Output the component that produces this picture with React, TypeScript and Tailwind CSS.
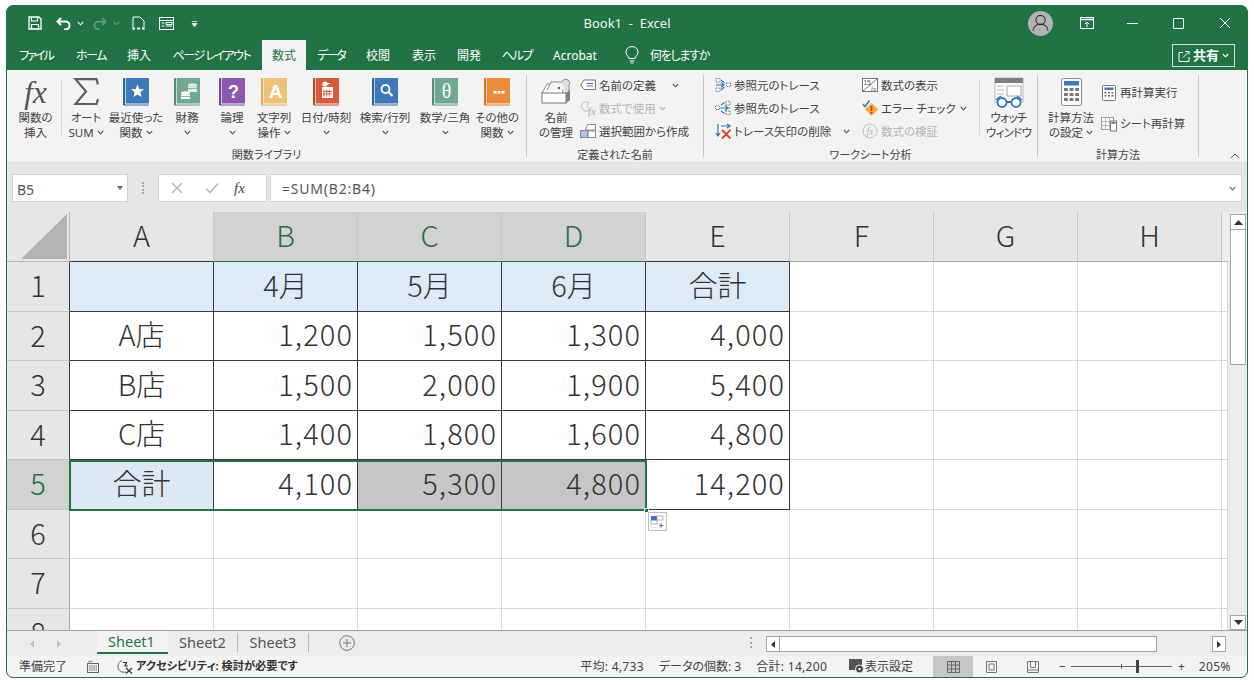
import type { ReactNode } from "react";

const Chevron = ({ color = "#555", className = "" }: { color?: string; className?: string }) => (
  <svg width="7" height="5" viewBox="0 0 7 5" className={className}>
    <path d="M0.8 1 L3.5 3.8 L6.2 1" fill="none" stroke={color} strokeWidth="1.1" />
  </svg>
);

// Ribbon book icons
const Book = ({ color, dark, children }: { color: string; dark: string; children?: ReactNode }) => (
  <svg width="26" height="28" viewBox="0 0 26 28">
    <rect x="0" y="0" width="26" height="27.5" fill={dark} rx="1" />
    <rect x="2" y="0" width="1.2" height="26" fill="#ffffffb0" />
    <rect x="3.2" y="0" width="22.8" height="25.5" fill={color} />
    <rect x="2" y="25.5" width="24" height="1" fill="#ffffff" />
    {children}
  </svg>
);

const BookIcon = ({ kind }: { kind: string }) => {
  if (kind === "star")
    return (
      <Book color="#3f79b9" dark="#2f659f">
        <path d="M14.5 6.5 L16.3 11 L21 11.3 L17.4 14.3 L18.6 19 L14.5 16.4 L10.4 19 L11.6 14.3 L8 11.3 L12.7 11 Z" fill="#fff" />
      </Book>
    );
  if (kind === "coins")
    return (
      <Book color="#71a891" dark="#578d77">
        <ellipse cx="18.5" cy="7" rx="4.5" ry="1.8" fill="#dfeee7" />
        <rect x="14" y="8.5" width="9" height="5.5" fill="#dfeee7" />
        <ellipse cx="11.5" cy="15" rx="4.5" ry="1.8" fill="#fff" />
        <rect x="7" y="16.5" width="9" height="4.5" fill="#fff" />
        <path d="M7 18.5h9M14 10.5h9" stroke="#71a891" strokeWidth="0.8" />
      </Book>
    );
  if (kind === "question")
    return (
      <Book color="#8b58ad" dark="#754495">
        <text x="14.5" y="20" textAnchor="middle" fontSize="18" fontWeight="700" fill="#fff" fontFamily="Liberation Sans">?</text>
      </Book>
    );
  if (kind === "text")
    return (
      <Book color="#efc375" dark="#e0ad55">
        <text x="14.5" y="20" textAnchor="middle" fontSize="19" fontWeight="700" fill="#fff" fontFamily="Liberation Sans">A</text>
      </Book>
    );
  if (kind === "date")
    return (
      <Book color="#d65c3c" dark="#bb4727">
        <rect x="9" y="9" width="11" height="11" fill="#fff" />
        <circle cx="12" cy="6" r="2.6" fill="#fff" />
        <path d="M11 11.5v7M13.7 11.5v7M16.3 11.5v7M10 13.5h9M10 16h9" stroke="#d65c3c" strokeWidth="0.9" />
        <rect x="12" y="5" width="5" height="1.3" fill="#fff" />
      </Book>
    );
  if (kind === "search")
    return (
      <Book color="#3f79b9" dark="#2f659f">
        <circle cx="13.5" cy="11" r="4" fill="none" stroke="#fff" strokeWidth="1.8" />
        <path d="M16.5 14 L20.5 18" stroke="#fff" strokeWidth="2" />
      </Book>
    );
  if (kind === "theta")
    return (
      <Book color="#71a891" dark="#578d77">
        <text x="14.5" y="19.5" textAnchor="middle" fontSize="20" fill="#fff" fontFamily="Liberation Serif">θ</text>
      </Book>
    );
  return (
    <Book color="#ea8b3d" dark="#d87724">
      <path d="M9.5 13h3v2.4h-3zM13.5 13h3v2.4h-3zM17.5 13h3v2.4h-3z" fill="#fff" />
    </Book>
  );
};

const Sigma = () => (
  <svg width="26" height="28" viewBox="0 0 26 28">
    <path d="M25 6.5 L23.5 1.2 H2.5 L13 13.5 L2.5 26 H23.5 L25 21" fill="none" stroke="#5f5f5f" strokeWidth="2.2" />
  </svg>
);

const NameManager = () => (
  <svg width="30" height="28" viewBox="0 0 30 28">
    <path d="M1 15 L6 6 H20 L22 15" fill="#fff" stroke="#8a8a8a" />
    <path d="M6 12 L10 4 H22 L25 12" fill="#f2f2f2" stroke="#8a8a8a" />
    <path d="M21 3 a4 3.5 0 0 1 7 4 V15 h-4" fill="#ddd" stroke="#8a8a8a" />
    <rect x="1" y="15" width="24" height="10" fill="#fff" stroke="#777" />
    <path d="M25 15 L29 12 V22 L25 25 Z" fill="#808080" />
    <circle cx="18" cy="10" r="1.2" fill="#666" />
  </svg>
);

const WatchWindow = () => (
  <svg width="30" height="31" viewBox="0 0 30 31">
    <rect x="1" y="1" width="28" height="24" fill="#fafafa" stroke="#bbb" />
    <rect x="1" y="1" width="28" height="5" fill="#7f7f7f" />
    <rect x="13" y="9" width="14" height="10" fill="#fff" stroke="#aaa" />
    <path d="M3 9h7M3 13h7M3 17h7" stroke="#bbb" />
    <path d="M2 23 L7 19 M28 23 L23 19" stroke="#2f77c0" strokeWidth="1.6" />
    <circle cx="8" cy="25.5" r="4.5" fill="#fff" stroke="#2f77c0" strokeWidth="1.8" />
    <circle cx="22" cy="25.5" r="4.5" fill="#fff" stroke="#2f77c0" strokeWidth="1.8" />
    <path d="M12.5 25 H17.5" stroke="#2f77c0" strokeWidth="1.8" />
  </svg>
);

const Calculator = () => (
  <svg width="21" height="28" viewBox="0 0 21 28">
    <rect x="0.5" y="0.5" width="20" height="27" rx="2" fill="#fafafa" stroke="#888" />
    <rect x="3" y="3" width="15" height="4.5" fill="#3f79b9" />
    <path d="M3 10h3.8v3H3zM8.6 10h3.8v3H8.6zM14.2 10H18v3h-3.8zM3 15h3.8v3H3zM8.6 15h3.8v3H8.6zM14.2 15H18v3h-3.8zM3 20h3.8v3H3zM8.6 20h3.8v3H8.6zM14.2 20H18v3h-3.8z" fill="#777" />
  </svg>
);

// Small 16px ribbon icons
const SmallIcon = ({ kind }: { kind: string }) => {
  const parts: Record<string, ReactNode> = {
    define: (
      <>
        <path d="M4 3 H15.5 V12.5 H4 L0.7 7.8 Z" fill="#fff" stroke="#777" />
        <path d="M6.5 6.5h6.5M6.5 9h6.5" stroke="#3f79b9" />
      </>
    ),
    use: (
      <>
        <path d="M3 2 H9 L7 6 L10 11 H4 L1 6 Z" fill="none" stroke="#c4c4c4" />
        <text x="8" y="15" fontSize="11" fontStyle="italic" fontFamily="Liberation Serif" fill="#b0b0b0">fx</text>
      </>
    ),
    create: (
      <>
        <path d="M6 5 L8 1.5 H15.5 V7 H6 Z" fill="#fff" stroke="#888" />
        <rect x="0.5" y="7.5" width="7" height="7" fill="#a9c4de" stroke="#7b8ea0" />
        <rect x="8" y="8" width="7.5" height="6.5" fill="#fff" stroke="#888" />
      </>
    ),
    precedent: (
      <>
        <path d="M1 1.5h4v3.5H1zM1 11h4v3.5H1zM11.5 6h4v3.5h-4z" fill="#fff" stroke="#777" strokeDasharray="1.2 0.8" />
        <path d="M1 8h7M6 5.5 L9 8 L6 10.5M6 3 L9.5 6M6 13 L9.5 10" fill="none" stroke="#2f77c0" strokeWidth="1.1" />
      </>
    ),
    dependent: (
      <>
        <path d="M0.5 6h4v3.5h-4zM11 1.5h4v3.5h-4zM11 11h4v3.5h-4z" fill="#fff" stroke="#777" strokeDasharray="1.2 0.8" />
        <path d="M5 8h10M10 5.5 L13 8 L10 10.5M6 5 L9.5 2.5M6 11 L9.5 13.5" fill="none" stroke="#2f77c0" strokeWidth="1.1" />
      </>
    ),
    remove: (
      <>
        <path d="M3 1v11M1 10 L3 13 L5 10" fill="none" stroke="#2f77c0" strokeWidth="1.2" />
        <path d="M6 3h8M12 1 L15 3 L12 5" fill="none" stroke="#2f77c0" strokeWidth="1.2" />
        <path d="M7 7 L15.5 15.5M15.5 7 L7 15.5" stroke="#d9462c" strokeWidth="1.8" />
      </>
    ),
    show: (
      <>
        <rect x="0.5" y="1.5" width="15" height="13" fill="#fff" stroke="#777" />
        <path d="M0.5 14.5 L15.5 1.5" stroke="#777" />
        <text x="1.5" y="8" fontSize="6.5" fontFamily="Liberation Sans" fill="#555">15</text>
        <text x="9" y="13.5" fontSize="7" fontStyle="italic" fontFamily="Liberation Serif" fill="#555">fx</text>
      </>
    ),
    error: (
      <>
        <path d="M1 4 L3 6.5 L7.5 0.5" fill="none" stroke="#2f77c0" strokeWidth="1.5" />
        <path d="M9.5 3 L16 9.5 L9.5 16 L3 9.5 Z" fill="#f0ae3a" />
        <path d="M9.5 6v5M9.5 12v1.8" stroke="#c8391f" strokeWidth="1.6" />
      </>
    ),
    evaluate: (
      <>
        <circle cx="8" cy="8" r="7" fill="none" stroke="#c0c0c0" />
        <text x="4.5" y="11.5" fontSize="9.5" fontStyle="italic" fontFamily="Liberation Serif" fill="#b0b0b0">fx</text>
      </>
    ),
    calcNow: (
      <>
        <rect x="1.5" y="0.5" width="13" height="15" rx="1" fill="#fff" stroke="#777" />
        <rect x="3.5" y="2.5" width="9" height="2.5" fill="#3f79b9" />
        <path d="M3.5 7h2v1.5h-2zM7 7h2v1.5H7zM10.5 7h2v1.5h-2zM3.5 10h2v1.5h-2zM7 10h2v1.5H7zM10.5 10h2v1.5h-2z" fill="#666" />
      </>
    ),
    calcSheet: (
      <>
        <rect x="0.5" y="1.5" width="12" height="12" fill="#fff" stroke="#999" />
        <path d="M0.5 5.5h12M0.5 9.5h12M4.5 1.5v12M8.5 1.5v12" stroke="#bbb" />
        <rect x="9.5" y="5" width="6" height="10" fill="#fff" stroke="#777" />
        <rect x="10.5" y="6" width="4" height="1.8" fill="#3f79b9" />
      </>
    ),
  };
  return (
    <svg width="17" height="17" viewBox="0 0 17 17" className="shrink-0">
      {parts[kind]}
    </svg>
  );
};

const LargeButton = ({
  width,
  icon,
  lines,
  chev = false,
  chevOnly = false,
  tight = false,
}: {
  width: string;
  icon: ReactNode;
  lines: string[];
  chev?: boolean;
  chevOnly?: boolean;
  tight?: boolean;
}) => (
  <div className={`${width} shrink-0 flex flex-col items-center pt-[8px]`}>
    <div className="h-[28px] flex items-center justify-center">{icon}</div>
    <div className={`mt-[4px] text-[11.5px] leading-[15px] text-[#444] text-center whitespace-nowrap ${tight ? "tracking-[-0.7px]" : ""}`}>
      {lines.map((line, i) => (
        <div key={i} className="flex items-center justify-center gap-[3px] h-[15px]">
          {line}
          {chev && i === lines.length - 1 && <Chevron />}
        </div>
      ))}
      {chevOnly && (
        <div className="flex items-center justify-center h-[15px]">
          <Chevron />
        </div>
      )}
    </div>
  </div>
);

const SmallRow = ({
  icon,
  label,
  disabled = false,
  chev,
  inlineChev = false,
}: {
  icon: string;
  label: string;
  disabled?: boolean;
  chev?: string;
  inlineChev?: boolean;
}) => (
  <div className="h-[23px] flex items-center whitespace-nowrap">
    <div className="w-[19px] shrink-0">
      <SmallIcon kind={icon} />
    </div>
    <span className={`text-[11.5px] ${disabled ? "text-[#b4b4b4]" : "text-[#444]"}`}>{label}</span>
    {inlineChev && <Chevron color="#b4b4b4" className="ml-[3px]" />}
    {chev && <Chevron className={`ml-auto ${chev}`} />}
  </div>
);

const Sep = () => <div className="w-px bg-[#c8c8c8] my-[5px] shrink-0" />;
const InnerSep = () => <div className="w-px bg-[#d8d8d8] mt-[10px] h-[55px] shrink-0" />;

const Group = ({ width, label, children }: { width: string; label: string; children: ReactNode }) => (
  <div className={`${width} shrink-0 flex flex-col`}>
    <div className="h-[77px] flex">{children}</div>
    <div className="text-[11px] leading-[15px] text-[#444] text-center">{label}</div>
  </div>
);

const tabs = [
  { label: "ファイル", w: "w-[58px]", track: "tracking-[-2px]" },
  { label: "ホーム", w: "w-[52px]", track: "tracking-[-1.5px]" },
  { label: "挿入", w: "w-[44px]", track: "" },
  { label: "ページ レイアウト", w: "w-[101px]", track: "tracking-[-1.5px]" },
  { label: "数式", w: "w-[44px]", track: "", active: true },
  { label: "データ", w: "w-[50px]", track: "tracking-[-2px]" },
  { label: "校閲", w: "w-[44px]", track: "" },
  { label: "表示", w: "w-[48px]", track: "" },
  { label: "開発", w: "w-[42px]", track: "" },
  { label: "ヘルプ", w: "w-[54px]", track: "tracking-[-1.3px]" },
  { label: "Acrobat", w: "w-[62px]", track: "" },
];

const columns = ["A", "B", "C", "D", "E", "F", "G", "H", ""];
const selectedColumns = ["B", "C", "D"];
const rowHeights = ["h-[50px]", "h-[49px]", "h-[50px]", "h-[49px]", "h-[50px]", "h-[49px]", "h-[50px]", "h-[50px]"];

const data: string[][] = [
  ["", "4月", "5月", "6月", "合計"],
  ["A店", "1,200", "1,500", "1,300", "4,000"],
  ["B店", "1,500", "2,000", "1,900", "5,400"],
  ["C店", "1,400", "1,800", "1,600", "4,800"],
  ["合計", "4,100", "5,300", "4,800", "14,200"],
];

const cellBg = (row: number, col: number) => {
  if (row === 0) return "bg-[#ddebf7]";
  if (row === 4 && col === 0) return "bg-[#dce9f5]";
  if (row === 4 && (col === 2 || col === 3)) return "bg-[#c6c6c6]";
  return "bg-white";
};

const Cell = ({ row, col }: { row: number; col: number }) => {
  const value = data[row]?.[col];
  const inTable = value !== undefined;
  const centered = row === 0 || col === 0;
  return (
    <div
      className={`border-r border-b flex items-center overflow-hidden whitespace-nowrap pb-[5px] ${
        inTable ? `border-[#3a3a3a] ${cellBg(row, col)}` : "border-[#d9d9d9] bg-white"
      } ${centered ? "justify-center" : "justify-end pr-[4px] tracking-[1.1px]"}`}
    >
      {value}
    </div>
  );
};

const Sheet = () => (
  <div className="relative flex-1 flex bg-[#ececec] overflow-hidden">
    <div className="w-[1221px] h-[419px] overflow-hidden grid grid-cols-[63px_repeat(8,144px)_6px] content-start text-[29px] leading-none text-[#333] font-light [font-family:'Noto_Sans_CJK_JP',sans-serif]">
      <div className="h-[50px] bg-[#e6e6e6] border-r border-b border-[#b8b8b8] relative">
        <svg width="48" height="46" viewBox="0 0 48 46" className="absolute right-[1px] bottom-[1px]">
          <polygon points="47,0 47,45 1,45" fill="#b3b3b3" />
        </svg>
      </div>
      {columns.map((c, i) => (
        <div
          key={i}
          className={`h-[50px] pb-[5px] flex items-center justify-center border-r border-b ${
            i === 8 ? "bg-[#ececec] border-[#b8b8b8] border-r-0" : "border-r-[#c6c6c6]"
          } ${
            selectedColumns.includes(c)
              ? "bg-[#d2d2d2] text-[#1f6e43] border-b-[#217346]"
              : i < 5
                ? "bg-[#e6e6e6] border-b-[#3a3a3a]"
                : i < 8
                  ? "bg-[#e6e6e6] border-b-[#a6a6a6]"
                  : ""
          }`}
        >
          {c}
        </div>
      ))}
      {rowHeights.map((h, r) => (
        <div key={r} className="contents">
          <div
            className={`${h} pb-[4px] flex items-center justify-center border-r border-b border-b-[#c6c6c6] ${
              r < 5 ? "border-r-[#3a3a3a]" : "border-r-[#a6a6a6]"
            } ${r === 4 ? "bg-[#d2d2d2] text-[#1f6e43]" : "bg-[#e6e6e6]"}`}
          >
            {r + 1}
          </div>
          {columns.map((_, c) => (
            <Cell key={c} row={r} col={c} />
          ))}
        </div>
      ))}
    </div>
    {/* selection outline */}
    <div className="absolute left-[62px] top-[248px] w-[578px] h-[51px] border-2 border-[#217346]" />
    <div className="absolute left-[637px] top-[296px] w-[5px] h-[5px] bg-[#217346] border border-white" />
    {/* quick analysis button */}
    <div className="absolute left-[641px] top-[300px] w-[19px] h-[19px] bg-white border border-[#bdbdbd]">
      <svg width="17" height="17" viewBox="0 0 17 17">
        <rect x="2" y="3" width="6" height="4" fill="#3f6fd8" />
        <rect x="8" y="3" width="6" height="4" fill="#fff" stroke="#999" strokeWidth="0.7" />
        <rect x="2" y="7.5" width="6" height="3.5" fill="#fff" stroke="#999" strokeWidth="0.7" />
        <rect x="2" y="11.5" width="6" height="3" fill="#fff" stroke="#bbb" strokeWidth="0.7" strokeDasharray="1 1" />
        <path d="M10 12.5h4.5M12.2 10.3v4.5" stroke="#777" strokeWidth="1.2" />
      </svg>
    </div>
    {/* vertical scrollbar */}
    <div className="flex-1 pl-[2px] pt-[2px] flex flex-col">
      <div className="w-[16px] h-[16px] bg-white border border-[#a6a6a6] flex items-center justify-center">
        <svg width="9" height="5" viewBox="0 0 9 5"><polygon points="4.5,0 9,5 0,5" fill="#333" /></svg>
      </div>
      <div className="w-[16px] h-[135px] bg-white border border-[#a6a6a6] border-t-0" />
      <div className="mt-auto w-[16px] h-[15px] bg-white border border-[#a6a6a6] flex items-center justify-center">
        <svg width="9" height="5" viewBox="0 0 9 5"><polygon points="0,0 9,0 4.5,5" fill="#333" /></svg>
      </div>
    </div>
  </div>
);

const App = () => {
  return (
    <div className="w-[1254px] h-[685px] bg-white pt-[5px] pl-[6px] [font-family:'Noto_Sans','Noto_Sans_CJK_JP',sans-serif] [font-feature-settings:'palt']">
      <div className="w-[1242px] h-[673px] rounded-[7px] border border-[#217346] overflow-hidden flex flex-col bg-[#217346]">
        {/* title bar */}
        <div className="h-[34px] shrink-0 grid grid-cols-[1fr_auto_1fr] items-center text-[#eef5f1]">
          <div className="flex items-center pl-[21px]">
            <svg width="14" height="14" viewBox="0 0 14 14">
              <path d="M1 1 H11 L13 3 V13 H1 Z" fill="none" stroke="#fff" strokeWidth="1.3" />
              <path d="M3.5 1.5V5h6V1.5M3.5 13V8.5h7V13" fill="none" stroke="#fff" strokeWidth="1.2" />
            </svg>
            <svg width="15" height="13" viewBox="0 0 15 13" className="ml-[14px]">
              <path d="M5 1 L1.5 4.5 L5 8 M2 4.5 H9.5 a4 4 0 0 1 0 8 H8" fill="none" stroke="#fff" strokeWidth="2" />
            </svg>
            <Chevron color="#e6f0ea" className="ml-[6px]" />
            <svg width="14" height="13" viewBox="0 0 15 13" className="ml-[9px]">
              <path d="M10 1 L13.5 4.5 L10 8 M13 4.5 H5.5 a4 4 0 0 0 0 8 H7" fill="none" stroke="#5f9c7c" strokeWidth="2" />
            </svg>
            <Chevron color="#5f9c7c" className="ml-[6px]" />
            <svg width="13" height="15" viewBox="0 0 13 15" className="ml-[12px]">
              <path d="M1 14 V1 H8 L12 5 V14" fill="none" stroke="#fff" strokeWidth="1" />
              <path d="M1 12.5h2M5 12.5h3M10 12.5h2" stroke="#fff" strokeWidth="2" />
            </svg>
            <svg width="15" height="13" viewBox="0 0 15 13" className="ml-[14px]">
              <rect x="0.5" y="0.5" width="14" height="12" fill="none" stroke="#fff" />
              <path d="M0.5 3.5h14M2.5 6h3M2.5 9h3M7 5.5h6v2H7zM7 9h6" fill="none" stroke="#fff" />
            </svg>
            <svg width="7" height="7" viewBox="0 0 7 7" className="ml-[17px]">
              <path d="M1 1.5h5M1 3.5h5L3.5 6.5Z" fill="#fff" stroke="#fff" strokeWidth="0.7" />
            </svg>
          </div>
          <div className="text-[13px] pt-[1px] whitespace-pre">Book1  -  Excel</div>
          <div className="flex items-center justify-end">
            <div className="w-[25px] h-[25px] rounded-full bg-[#b3b3b3] flex items-center justify-center mr-[27px]">
              <svg width="17" height="18" viewBox="0 0 17 18">
                <circle cx="8.5" cy="6" r="4.6" fill="none" stroke="#333" strokeWidth="1.1" />
                <path d="M1 17 a7.5 7 0 0 1 15 0" fill="none" stroke="#333" strokeWidth="1.1" />
              </svg>
            </div>
            <svg width="14" height="12" viewBox="0 0 14 12" className="mr-[33px]">
              <rect x="0.5" y="0.5" width="13" height="11" fill="none" stroke="#fff" />
              <path d="M0.5 2.5h13" stroke="#fff" strokeWidth="1.4" />
              <path d="M7 10V5M5 7 L7 5 L9 7" fill="none" stroke="#fff" />
            </svg>
            <div className="w-[11px] h-px bg-white mr-[35px]" />
            <div className="w-[11px] h-[11px] border border-white rounded-[1px] mr-[35px]" />
            <svg width="12" height="12" viewBox="0 0 12 12" className="mr-[16px]">
              <path d="M1 1 L11 11 M11 1 L1 11" stroke="#fff" />
            </svg>
          </div>
        </div>

        {/* ribbon tabs */}
        <div className="h-[30px] shrink-0 flex text-[12px] text-white relative">
          {tabs.map((tab) => (
            <div
              key={tab.label}
              className={`${tab.w} ${tab.track} shrink-0 pt-[1px] flex items-center justify-center whitespace-pre ${
                tab.active ? "bg-[#f3f3f3] text-[#217346]" : ""
              }`}
            >
              {tab.label}
            </div>
          ))}
          <svg width="14" height="18" viewBox="0 0 14 18" className="ml-[19px] self-center">
            <path d="M4 12.5 C3.5 10 1 9 1 6 a6 5.5 0 0 1 12 0 C13 9 10.5 10 10 12.5 Z M4.5 15h5M5.5 17h3" fill="none" stroke="#fff" />
          </svg>
          <div className="ml-[11px] pt-[1px] flex items-center tracking-[-1.3px]">何をしますか</div>
          <div className="absolute left-[1165px] top-[4px] w-[63px] h-[23px] border border-[#cfe0d6] flex items-center justify-center gap-[3px]">
            <svg width="12" height="12" viewBox="0 0 12 12">
              <path d="M5 2.5H1v9h10V7M7 1.5h4v3M11 1.5 L5 7.5" fill="none" stroke="#fff" />
            </svg>
            <span className="font-bold text-[13px]">共有</span>
            <Chevron color="#fff" />
          </div>
        </div>

        {/* ribbon */}
        <div className="h-[93px] shrink-0 flex bg-[#f3f3f3] border-b border-[#dcdcdc]">
          <Group width="w-[519px]" label="関数ライブラリ">
            <div className="w-[3px]" />
            <LargeButton
              width="w-[51px]"
              icon={<span className="text-[31px] leading-none italic text-[#555] [font-family:'Liberation_Serif',serif]">fx</span>}
              lines={["関数の", "挿入"]}
            />
            <InnerSep />
            <LargeButton width="w-[48px]" icon={<Sigma />} lines={["オート", "SUM"]} chev />
            <LargeButton width="w-[52px]" icon={<BookIcon kind="star" />} lines={["最近使った", "関数"]} chev />
            <LargeButton width="w-[50px]" icon={<BookIcon kind="coins" />} lines={["財務"]} chevOnly />
            <LargeButton width="w-[40px]" icon={<BookIcon kind="question" />} lines={["論理"]} chevOnly />
            <LargeButton width="w-[44px]" icon={<BookIcon kind="text" />} lines={["文字列", "操作"]} chev />
            <LargeButton width="w-[60px]" icon={<BookIcon kind="date" />} lines={["日付/時刻"]} chevOnly />
            <LargeButton width="w-[58px]" icon={<BookIcon kind="search" />} lines={["検索/行列"]} chevOnly />
            <LargeButton width="w-[62px]" icon={<BookIcon kind="theta" />} lines={["数学/三角"]} chevOnly />
            <LargeButton width="w-[42px]" icon={<BookIcon kind="other" />} lines={["その他の", "関数"]} chev />
          </Group>
          <Sep />
          <Group width="w-[176px]" label="定義された名前">
            <div className="w-[9px]" />
            <LargeButton width="w-[40px]" icon={<NameManager />} lines={["名前", "の管理"]} />
            <div className="ml-[4px] pt-[4px] w-[123px]">
              <SmallRow icon="define" label="名前の定義" chev="mr-[24px]" />
              <SmallRow icon="use" label="数式で使用" disabled inlineChev />
              <SmallRow icon="create" label="選択範囲から作成" />
            </div>
          </Group>
          <Sep />
          <Group width="w-[333px]" label="ワークシート分析">
            <div className="ml-[11px] pt-[4px] w-[147px]">
              <SmallRow icon="precedent" label="参照元のトレース" />
              <SmallRow icon="dependent" label="参照先のトレース" />
              <SmallRow icon="remove" label="トレース矢印の削除" chev="mr-[12px]" />
            </div>
            <div className="pt-[4px] w-[117px]">
              <SmallRow icon="show" label="数式の表示" />
              <SmallRow icon="error" label="エラー チェック" chev="mr-[12px]" />
              <SmallRow icon="evaluate" label="数式の検証" disabled />
            </div>
            <InnerSep />
            <LargeButton width="w-[57px]" icon={<WatchWindow />} lines={["ウォッチ", "ウィンドウ"]} tight />
          </Group>
          <Sep />
          <Group width="w-[160px]" label="計算方法">
            <div className="w-[3px]" />
            <LargeButton width="w-[60px]" icon={<Calculator />} lines={["計算方法", "の設定"]} chev />
            <div className="pt-[9px]">
              <div className="h-[28px] flex items-center">
                <SmallRow icon="calcNow" label="再計算実行" />
              </div>
              <div className="h-[3px]" />
              <div className="h-[28px] flex items-center">
                <SmallRow icon="calcSheet" label="シート再計算" />
              </div>
            </div>
          </Group>
          <Sep />
          <div className="flex-1 flex items-end justify-end pr-[7px] pb-[3px]">
            <svg width="10" height="6" viewBox="0 0 10 6">
              <path d="M0.8 5 L5 1 L9.2 5" fill="none" stroke="#555" />
            </svg>
          </div>
        </div>

        {/* formula bar */}
        <div className="h-[49px] shrink-0 bg-[#e6e6e6] pl-[5px] pt-[11px]">
          <div className="flex h-[28px] text-[14px] text-[#555]">
            <div className="w-[116px] bg-white border border-[#d4d4d4] flex items-center justify-between pl-[4px] pr-[4px]">
              <span className="pt-[2px]">B5</span>
              <svg width="6" height="4" viewBox="0 0 6 4"><polygon points="0,0 6,0 3,4" fill="#666" /></svg>
            </div>
            <div className="w-[30px] flex items-center justify-center">
              <div className="w-[2px] h-[12px] border-l-2 border-dotted border-[#a6a6a6]" />
            </div>
            <div className="w-[109px] bg-white border border-[#d4d4d4] flex items-center pl-[12px]">
              <svg width="12" height="12" viewBox="0 0 12 12">
                <path d="M1 1 L11 11M11 1 L1 11" stroke="#b0b0b0" strokeWidth="1.2" />
              </svg>
              <svg width="14" height="12" viewBox="0 0 14 12" className="ml-[22px]">
                <path d="M1 6.5 L5 10.5 L13 1.5" fill="none" stroke="#b0b0b0" strokeWidth="1.4" />
              </svg>
              <span className="ml-[15px] italic text-[15px] text-[#444] [font-family:'Liberation_Serif',serif]">fx</span>
            </div>
            <div className="ml-[3px] w-[972px] bg-white border border-[#d4d4d4] flex items-center justify-between pl-[11px] pr-[5px]">
              <span className="tracking-[0.8px]">=SUM(B2:B4)</span>
              <Chevron color="#666" />
            </div>
          </div>
        </div>

        <Sheet />

        {/* sheet tabs */}
        <div className="h-[26px] shrink-0 bg-[#ececec] border-t border-[#a6a6a6] flex items-start text-[14.5px] text-[#555] relative">
          <svg width="7" height="8" viewBox="0 0 7 8" className="absolute left-[22px] top-[9px]"><polygon points="5,0 5,8 1,4" fill="#c0c0c0" /></svg>
          <svg width="7" height="8" viewBox="0 0 7 8" className="absolute left-[48px] top-[9px]"><polygon points="2,0 2,8 6,4" fill="#c0c0c0" /></svg>
          <div className="ml-[90px] w-[71px] h-[23px] pr-[2px] bg-[#f3f3f3] border-b-2 border-[#217346] text-[#217346] flex items-center justify-center">
            Sheet1
          </div>
          <div className="w-[69px] h-[23px] flex items-center justify-center">Sheet2</div>
          <div className="w-px h-[19px] mt-[2px] bg-[#b8b8b8]" />
          <div className="w-[70px] h-[23px] flex items-center justify-center">Sheet3</div>
          <div className="w-px h-[19px] mt-[2px] bg-[#b8b8b8]" />
          <svg width="16" height="16" viewBox="0 0 16 16" className="ml-[30px] mt-[4px]">
            <circle cx="8" cy="8" r="7.3" fill="none" stroke="#777" />
            <path d="M8 4v8M4 8h8" stroke="#777" />
          </svg>
          <div className="ml-[395px] mt-[6px] w-[2px] h-[11px] border-l-2 border-dotted border-[#a6a6a6]" />
          <div className="ml-[14px] mt-[5px] w-[14px] h-[16px] bg-white border border-[#a6a6a6] flex items-center justify-center">
            <svg width="4" height="7" viewBox="0 0 4 7"><polygon points="4,0 4,7 0,3.5" fill="#333" /></svg>
          </div>
          <div className="mt-[5px] w-[377px] h-[16px] bg-white border border-[#a6a6a6] border-l-0" />
          <div className="ml-[55px] mt-[5px] w-[14px] h-[16px] bg-white border border-[#a6a6a6] flex items-center justify-center">
            <svg width="4" height="7" viewBox="0 0 4 7"><polygon points="0,0 0,7 4,3.5" fill="#333" /></svg>
          </div>
        </div>

        {/* status bar */}
        <div className="h-[21px] shrink-0 bg-[#f3f3f3] flex items-center text-[12px] text-[#444] whitespace-nowrap">
          <span className="ml-[12px]">準備完了</span>
          <svg width="12" height="12" viewBox="0 0 12 12" className="ml-[20px]">
            <rect x="0.5" y="2.5" width="11" height="9" fill="none" stroke="#666" />
            <path d="M2 0.5h3v2H2zM2 5h8M2 7h8M2 9h8" fill="none" stroke="#666" strokeDasharray="1.5 0.7" />
          </svg>
          <svg width="16" height="15" viewBox="0 0 16 15" className="ml-[18px]">
            <path d="M5 1.5 A6 6 0 1 0 9 13" fill="none" stroke="#666" />
            <path d="M6 3.5 H9.5 L8 7 H11 M9 9 L15 14.5M15 9 L9 14.5" fill="none" stroke="#333" strokeWidth="1.2" />
          </svg>
          <span className="ml-[3px] font-bold text-[11.2px] text-[#333]">アクセシビリティ: 検討が必要です</span>
          <div className="ml-auto flex items-center">
            <span className="tracking-[0.3px]">平均: 4,733</span>
            <span className="ml-[15px]">データの個数: 3</span>
            <span className="ml-[15px] tracking-[0.3px]">合計: 14,200</span>
            <svg width="16" height="15" viewBox="0 0 16 15" className="ml-[22px]">
              <rect x="0" y="0" width="13" height="11" fill="#555" />
              <circle cx="10.5" cy="10" r="4" fill="#444" stroke="#f3f3f3" />
              <circle cx="10.5" cy="10" r="1.2" fill="#fff" />
            </svg>
            <span>表示設定</span>
            <div className="ml-[20px] w-[40px] h-[21px] bg-[#c6c6c6] flex items-center justify-center">
              <svg width="13" height="12" viewBox="0 0 13 12">
                <path d="M0.5 0.5h12v11H0.5zM4.5 0.5v11M8.5 0.5v11M0.5 4h12M0.5 8h12" fill="none" stroke="#666" />
              </svg>
            </div>
            <svg width="11" height="12" viewBox="0 0 11 12" className="ml-[13px]">
              <path d="M0.5 0.5h10v11H0.5zM3 3h5v6H3z" fill="none" stroke="#777" />
            </svg>
            <svg width="12" height="12" viewBox="0 0 12 12" className="ml-[30px]">
              <path d="M0.5 0.5h11v11H0.5zM3.5 0.5v6h5v-6M0.5 9h11" fill="none" stroke="#777" />
            </svg>
            <span className="ml-[20px]">−</span>
            <div className="ml-[5px] w-[101px] h-px bg-[#666] relative">
              <div className="absolute left-[50px] -top-[2px] w-px h-[5px] bg-[#666]" />
              <div className="absolute left-[65px] -top-[6px] w-[3px] h-[13px] bg-[#444]" />
            </div>
            <span className="ml-[6px]">+</span>
            <span className="ml-[14px] mr-[16px] tracking-[0.4px]">205%</span>
          </div>
        </div>
      </div>
    </div>
  );
};

export default App;
